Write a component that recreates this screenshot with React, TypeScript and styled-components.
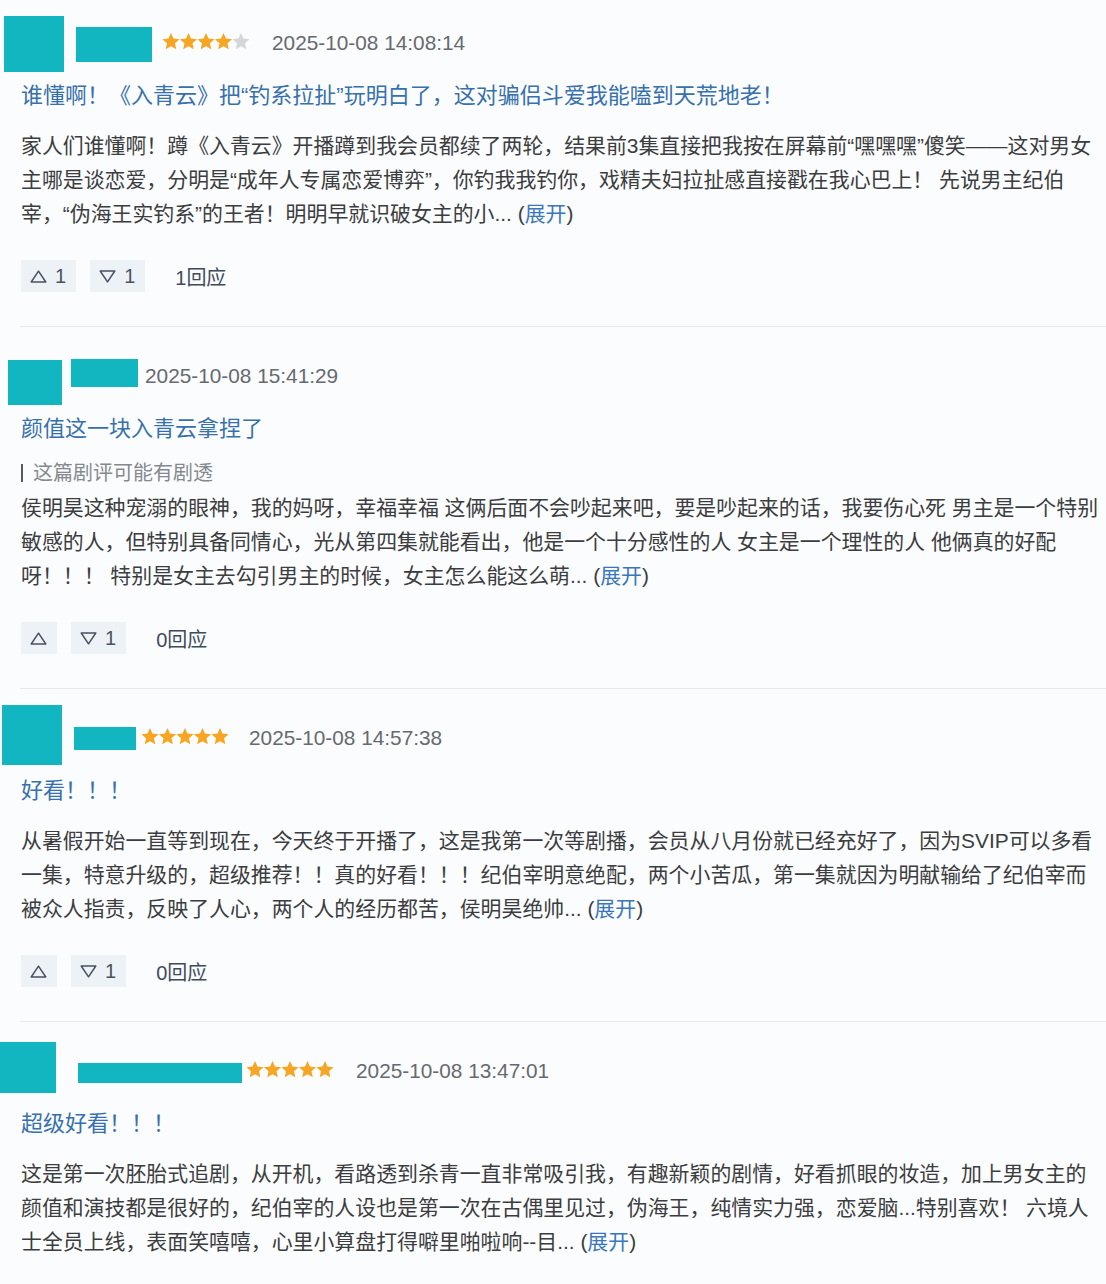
import styled, { createGlobalStyle } from 'styled-components';

const GlobalStyle = createGlobalStyle`
  html, body {
    margin: 0;
    padding: 0;
    background: #fbfcfd;
  }
  body {
    font-family: "Liberation Sans", "Noto Sans CJK SC", sans-serif;
  }
`;

type Box = { w: number; h: number; left: number; top: number };

type ReviewData = {
    avatar: Box;
    name: Box;
    stars?: number;
    starGap?: number;
    dateGap: number;
    date: string;
    title: string;
    spoiler?: boolean;
    lines: string[];
    up: number | null;
    down: number;
    replies: number;
};

const reviews: ReviewData[] = [
    {
        avatar: { w: 60, h: 56, left: -17, top: 1 },
        name: { w: 76, h: 35, left: 12, top: 12 },
        stars: 4,
        starGap: 10,
        dateGap: 22,
        date: '2025-10-08 14:08:14',
        title: '谁懂啊！《入青云》把“钓系拉扯”玩明白了，这对骗侣斗爱我能嗑到天荒地老！',
        lines: [
            '家人们谁懂啊！蹲《入青云》开播蹲到我会员都续了两轮，结果前3集直接把我按在屏幕前“嘿嘿嘿”傻笑——这对男女',
            '主哪是谈恋爱，分明是“成年人专属恋爱博弈”，你钓我我钓你，戏精夫妇拉扯感直接戳在我心巴上！ 先说男主纪伯',
            '宰，“伪海王实钓系”的王者！明明早就识破女主的小...',
        ],
        up: 1,
        down: 1,
        replies: 1,
    },
    {
        avatar: { w: 54, h: 45, left: -13, top: 12 },
        name: { w: 67, h: 28, left: 9, top: 11 },
        dateGap: 7,
        date: '2025-10-08 15:41:29',
        title: '颜值这一块入青云拿捏了',
        spoiler: true,
        lines: [
            '侯明昊这种宠溺的眼神，我的妈呀，幸福幸福 这俩后面不会吵起来吧，要是吵起来的话，我要伤心死 男主是一个特别',
            '敏感的人，但特别具备同情心，光从第四集就能看出，他是一个十分感性的人 女主是一个理性的人 他俩真的好配',
            '呀！！！ 特别是女主去勾引男主的时候，女主怎么能这么萌...',
        ],
        up: null,
        down: 1,
        replies: 0,
    },
    {
        avatar: { w: 60, h: 60, left: -19, top: -5 },
        name: { w: 62, h: 23, left: 12, top: 17 },
        stars: 5,
        starGap: 5,
        dateGap: 20,
        date: '2025-10-08 14:57:38',
        title: '好看！！！',
        lines: [
            '从暑假开始一直等到现在，今天终于开播了，这是我第一次等剧播，会员从八月份就已经充好了，因为SVIP可以多看',
            '一集，特意升级的，超级推荐！！真的好看！！！纪伯宰明意绝配，两个小苦瓜，第一集就因为明献输给了纪伯宰而',
            '被众人指责，反映了人心，两个人的经历都苦，侯明昊绝帅...',
        ],
        up: null,
        down: 1,
        replies: 0,
    },
    {
        avatar: { w: 56, h: 51, left: -21, top: -1 },
        name: { w: 164, h: 20, left: 22, top: 20 },
        stars: 5,
        starGap: 4,
        dateGap: 22,
        date: '2025-10-08 13:47:01',
        title: '超级好看！！！',
        lines: [
            '这是第一次胚胎式追剧，从开机，看路透到杀青一直非常吸引我，有趣新颖的剧情，好看抓眼的妆造，加上男女主的',
            '颜值和演技都是很好的，纪伯宰的人设也是第一次在古偶里见过，伪海王，纯情实力强，恋爱脑...特别喜欢！ 六境人',
            '士全员上线，表面笑嘻嘻，心里小算盘打得噼里啪啦响--目...',
        ],
        up: null,
        down: 1,
        replies: 0,
    },
];

const STAR = 'M9 0L11.47 5.6L17.56 6.22L12.99 10.3L14.29 16.28L9 13.2L3.71 16.28L5.01 10.3L0.44 6.22L6.53 5.6Z';

const Stars = ({ count }: { count: number }) => (
    <svg width="88" height="17" viewBox="0 0 88 17">
        {[0, 1, 2, 3, 4].map(i => (
            <path
                key={i}
                d={STAR}
                transform={`translate(${i * 17.5} 0)`}
                fill={i < count ? '#f6a623' : '#d4d6d9'}
            />
        ))}
    </svg>
);

const UpIcon = () => (
    <svg width="17" height="13" viewBox="0 0 17 13">
        <path d="M8.5 1.2L15.8 12H1.2z" fill="none" stroke="#4a5262" strokeWidth="1.5" strokeLinejoin="round" />
    </svg>
);

const DownIcon = () => (
    <svg width="17" height="13" viewBox="0 0 17 13">
        <path d="M1.2 1H15.8L8.5 11.8z" fill="none" stroke="#4a5262" strokeWidth="1.5" strokeLinejoin="round" />
    </svg>
);

const Review = ({ data, last }: { data: ReviewData; last: boolean }) => (
    <Item $last={last}>
        <Header>
            <Avatar $box={data.avatar} />
            <NameMask $box={data.name} />
            {data.stars !== undefined && (
                <StarWrap $gap={data.starGap ?? 0}>
                    <Stars count={data.stars} />
                </StarWrap>
            )}
            <DateText $gap={data.dateGap}>{data.date}</DateText>
        </Header>
        <Title>{data.title}</Title>
        {data.spoiler && <Spoiler>这篇剧评可能有剧透</Spoiler>}
        <Body $spoiler={!!data.spoiler}>
            {data.lines.map((line, index) => (
                <Line key={index}>
                    {line}
                    {index === data.lines.length - 1 && (
                        <> (<More>展开</More>)</>
                    )}
                </Line>
            ))}
        </Body>
        {/* the screenshot is cut right under the last review's text */}
        {!last && (
            <Actions>
                <VoteButton>
                    <UpIcon />
                    {data.up !== null && <span>{data.up}</span>}
                </VoteButton>
                <VoteButton>
                    <DownIcon />
                    <span>{data.down}</span>
                </VoteButton>
                <Replies>{data.replies}回应</Replies>
            </Actions>
        )}
    </Item>
);

const App = () => (
    <>
        <GlobalStyle />
        <Page>
            {reviews.map((review, index) => (
                <Review key={index} data={review} last={index === reviews.length - 1} />
            ))}
        </Page>
    </>
);

export default App;

const Page = styled.div`
    width: 1106px;
    height: 1284px;
    overflow: hidden;
    padding: 15px 0 0 21px;
    box-sizing: border-box;
    background: #fbfcfd;
`;

const Item = styled.div<{ $last: boolean }>`
    padding-bottom: ${p => (p.$last ? 0 : 34)}px;
    margin-bottom: ${p => (p.$last ? 0 : 21)}px;
    border-bottom: ${p => (p.$last ? 'none' : '1px solid #e6e9ec')};
    margin-left: -1px;
    padding-left: 1px;
`;

const Header = styled.div`
    display: flex;
    align-items: center;
    height: 56px;
`;

const Avatar = styled.div<{ $box: Box }>`
    align-self: flex-start;
    flex-shrink: 0;
    width: ${p => p.$box.w}px;
    height: ${p => p.$box.h}px;
    margin-left: ${p => p.$box.left}px;
    margin-top: ${p => p.$box.top}px;
    background: #12b6c1;
`;

const NameMask = styled.div<{ $box: Box }>`
    align-self: flex-start;
    flex-shrink: 0;
    width: ${p => p.$box.w}px;
    height: ${p => p.$box.h}px;
    margin-left: ${p => p.$box.left}px;
    margin-top: ${p => p.$box.top}px;
    background: #12b6c1;
`;

const StarWrap = styled.div<{ $gap: number }>`
    display: flex;
    margin-left: ${p => p.$gap}px;
    margin-top: -3px;
`;

const DateText = styled.span<{ $gap: number }>`
    margin-left: ${p => p.$gap}px;
    font-size: 20.8px;
    color: #666a70;
    white-space: nowrap;
`;

const Title = styled.div`
    margin-top: 8px;
    font-size: 22px;
    line-height: 34px;
    color: #3670ad;
    white-space: nowrap;
`;

const Spoiler = styled.div`
    margin-top: 12px;
    display: flex;
    align-items: center;
    gap: 10px;
    font-size: 20px;
    line-height: 30px;
    color: #85898f;
    &::before {
        content: '';
        display: block;
        width: 2px;
        height: 18px;
        background: #555b63;
    }
`;

const Body = styled.div<{ $spoiler: boolean }>`
    margin-top: ${p => (p.$spoiler ? 3 : 16)}px;
    font-size: 20.9px;
    line-height: 34px;
    color: #3b3d40;
`;

const Line = styled.div`
    white-space: nowrap;
`;

const More = styled.span`
    color: #3a76bd;
`;

const Actions = styled.div`
    margin-top: 29px;
    display: flex;
    align-items: center;
    gap: 14px;
`;

const VoteButton = styled.div`
    display: flex;
    align-items: center;
    gap: 8px;
    height: 32px;
    padding: 0 10px 0 9px;
    background: #edf2f7;
    font-size: 20px;
    color: #4a5262;
`;

const Replies = styled.span`
    margin-left: 16px;
    font-size: 20px;
    color: #3e4b5c;
`;
